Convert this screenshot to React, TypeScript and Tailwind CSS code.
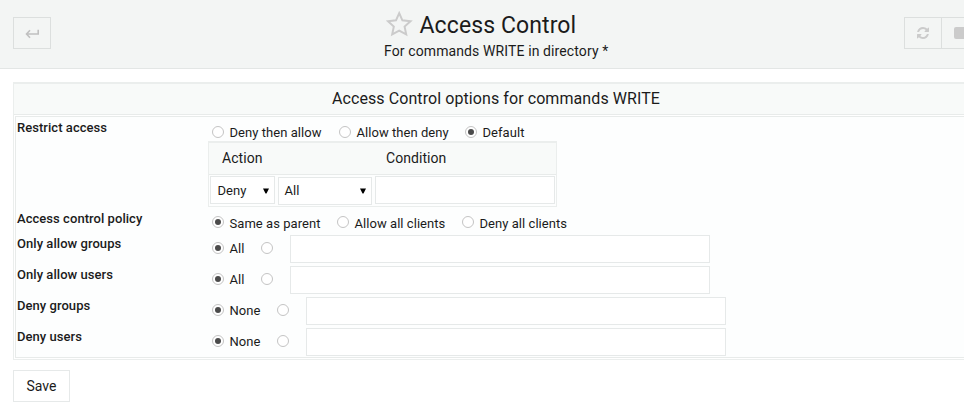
import React from "react";

function Radio({ checked = false, className = "" }: { checked?: boolean; className?: string }) {
  return (
    <span
      role="radio"
      aria-checked={checked}
      className={`flex size-3 shrink-0 items-center justify-center rounded-full border border-[#c4c4c4] bg-white ${className}`}
    >
      {checked && <span className="size-1.5 rounded-full bg-[#4b4b4b]" />}
    </span>
  );
}

function Option({ label, checked, width, textTop = "mt-px" }: { label: string; checked?: boolean; width: string; textTop?: string }) {
  return (
    <label className={`flex shrink-0 ${width}`}>
      <Radio checked={checked} />
      <span className={`ml-[5.5px] h-3 whitespace-nowrap leading-3 ${textTop}`}>{label}</span>
    </label>
  );
}

function Row({ label, height, labelTop = "pt-[3px]", children }: { label: string; height: string; labelTop?: string; children: React.ReactNode }) {
  return (
    <div className={`flex ${height}`}>
      <div className={`w-48 shrink-0 pl-px font-medium leading-4 ${labelTop}`}>{label}</div>
      <div className="min-w-0 flex-1">{children}</div>
    </div>
  );
}

function ListRow({ label, value, gap }: { label: string; value: string; gap: string }) {
  return (
    <Row label={label} height="h-[31px]" labelTop="pt-px">
      <div className="flex items-start pl-1">
        <div className="flex pt-[7px]">
          <Option label={value} checked width={gap} />
          <Radio />
        </div>
        <input className="ml-[17px] h-7 w-[420px] border border-[#e6e9e9] bg-white outline-none" />
      </div>
    </Row>
  );
}

function Caret() {
  return (
    <svg width="6" height="6" viewBox="0 0 6 6" fill="#000">
      <path d="M0 .5h6L3.500 5.500h-1z" />
    </svg>
  );
}

export default function App() {
  return (
    <div className="h-[412px] w-[964px] overflow-hidden bg-white font-['Roboto',sans-serif] text-[13px] tracking-[0.05px] text-[#1b1b1b]">
      <header className="flex h-[69px] border-b border-[#e3e6e5] bg-[#f3f5f4]">
        <button className="ml-[13px] mt-[17px] flex h-8 w-[38px] shrink-0 items-center justify-center border border-[#dcdfde]">
          <svg className="mt-px" width="14" height="10" viewBox="0 0 14 10" fill="none" stroke="#c0c0c0" strokeWidth="1.6">
            <path d="M13.200 .8v4.200H1.500M5 1.200 1.500 5 5 8.800" />
          </svg>
        </button>
        <div className="ml-[333px] w-[230px] shrink-0">
          <div className="flex h-10 pl-0.5 pt-[11px]">
            <svg className="shrink-0" width="27" height="26" viewBox="0 0 27 26" fill="none" stroke="#cbcbcb" strokeWidth="2">
              <path d="M13.200 2.200 16.400 9.300 24.500 10.300 18.600 15.600 20.200 23.400 13.200 19.600 6.200 23.400 7.800 15.600 2 10.300 10 9.300z" />
            </svg>
            <h1 className="ml-[6.5px] mt-px whitespace-nowrap text-[23px] leading-7 tracking-[0.1px]">Access Control</h1>
          </div>
          <p className="whitespace-nowrap text-sm leading-[22px] tracking-[0.11px]">For commands WRITE in directory *</p>
        </div>
        <div className="ml-[290px] mt-[17px] flex h-8 w-[80px] shrink-0 border border-[#dcdfde]">
          <div className="flex w-9 shrink-0 items-center justify-center">
            <svg width="12" height="12" viewBox="0 0 1536 1536" fill="#cbcbcb">
              <path d="M1511 928q0 5-1 7-64 268-268 434.500T764 1536q-146 0-282.500-55T238 1324l-129 129q-19 19-45 19t-45-19-19-45V960q0-26 19-45t45-19h448q26 0 45 19t19 45-19 45l-137 137q71 66 161 102t187 36q134 0 250-65t186-179q11-17 53-117 8-23 30-23h192q13 0 22.500 9.500t9.500 22.500zm25-800v448q0 26-19 45t-45 19h-448q-26 0-45-19t-19-45 19-45l138-138Q969 256 768 256q-134 0-250 65T332 500q-11 17-53 117-8 23-30 23H50q-13 0-22.500-9.500T18 608v-7q65-268 270-434.500T768 0q146 0 284 55.500T1297 212l130-129q19-19 45-19t45 19 19 45z" />
            </svg>
          </div>
          <div className="flex items-center border-l border-[#dcdfde] pl-3">
            <span className="h-3 w-4 rounded-[2px] bg-[#cbcbcb]" />
          </div>
        </div>
      </header>

      <main className="ml-[13px] mt-[13px] w-[966px]">
        <section className="border border-t-2 border-[#ebeeed]">
          <h2 className="h-[31px] border-b border-[#e8ebea] bg-[#f8faf9] text-center text-base leading-[29px] tracking-[0.08px]">
            Access Control options for commands WRITE
          </h2>
          <div className="m-px h-[242px] border border-[#e8ebea] bg-[#fdfefe]">
            <Row label="Restrict access" height="h-[91px]">
              <div className="flex h-6 pl-1 pt-[9px]">
                <Option label="Deny then allow" width="w-[127px]" />
                <Option label="Allow then deny" width="w-[126px]" />
                <Option label="Default" checked width="w-24" />
              </div>
              <div className="h-[66px] w-[349px] border border-t-2 border-[#ebeeed]">
                <div className="flex h-8 border-b border-[#e8ebea] bg-[#f8faf9] pl-[13px] text-sm leading-[30px]">
                  <span className="w-[164px]">Action</span>
                  <span>Condition</span>
                </div>
                <div className="flex pl-px pt-px">
                  <button className="flex h-7 w-[65px] items-center justify-between border border-[#e6e9e9] bg-white pl-[6.5px] pr-[5px] pt-0.5">
                    Deny <Caret />
                  </button>
                  <button className="ml-[3px] mt-px flex h-7 w-[94px] items-center justify-between border border-[#e6e9e9] bg-white pl-[5.5px] pr-[5px]">
                    All <Caret />
                  </button>
                  <input className="ml-[3px] h-7 w-[180px] border border-[#e6e9e9] bg-white outline-none" />
                </div>
              </div>
            </Row>
            <Row label="Access control policy" height="h-[27px]">
              <div className="flex pl-1 pt-2">
                <Option label="Same as parent" checked width="w-[125px]" textTop="mt-0.5" />
                <Option label="Allow all clients" width="w-[125px]" textTop="mt-0.5" />
                <Option label="Deny all clients" width="w-32" textTop="mt-0.5" />
              </div>
            </Row>
            <ListRow label="Only allow groups" value="All" gap="w-[49px]" />
            <ListRow label="Only allow users" value="All" gap="w-[49px]" />
            <ListRow label="Deny groups" value="None" gap="w-[65px]" />
            <ListRow label="Deny users" value="None" gap="w-[65px]" />
          </div>
        </section>
        <button className="mt-2.5 h-8 w-[57px] border border-[#e6e9e9] bg-white text-sm">Save</button>
      </main>
    </div>
  );
}
